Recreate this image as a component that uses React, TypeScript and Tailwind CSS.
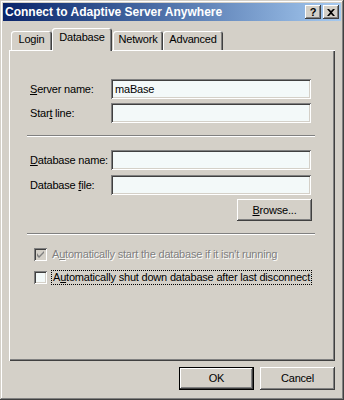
import React from "react";

const raised =
  "shadow-[inset_-1px_-1px_#404040,inset_1px_1px_#ffffff,inset_-2px_-2px_#808080,inset_2px_2px_#d4d0c8]";
const sunken =
  "shadow-[inset_1px_1px_#808080,inset_-1px_-1px_#ffffff,inset_2px_2px_#404040,inset_-2px_-2px_#d4d0c8]";

function Field({ label, value }: { label: React.ReactNode; value?: string }) {
  return (
    <div className="flex items-center h-[20px] pl-[3px]">
      <div className="w-[81px] shrink-0 whitespace-nowrap">{label}</div>
      <div className={`w-[200px] h-[20px] bg-[#f3f9f9] ${sunken} flex items-center px-[4px]`}>
        {value}
      </div>
    </div>
  );
}

function Separator() {
  return <div className="h-[2px] border-t border-t-[#808080] border-b border-b-white" />;
}

function Tab({ label, selected, w }: { label: string; selected?: boolean; w: string }) {
  if (selected) {
    return (
      <div
        className={`${w} h-[23px] -mb-px relative z-10 bg-[#d4d0c8] rounded-t-[3px] shadow-[inset_1px_1px_#ffffff,inset_-1px_0_#404040,inset_-2px_0_#808080] flex justify-center pt-[4px]`}
      >
        {label}
      </div>
    );
  }
  return (
    <div
      className={`${w} h-[19px] rounded-t-[3px] shadow-[inset_1px_1px_#ffffff,inset_-1px_0_#404040,inset_-2px_0_#808080] flex justify-center pt-[3px]`}
    >
      {label}
    </div>
  );
}

export default function App() {
  return (
    <div
      className="w-[344px] h-[400px] bg-[#d4d0c8] text-black text-[11px] tracking-[-0.2px] leading-none p-[3px] flex flex-col shadow-[inset_-1px_-1px_#404040,inset_1px_1px_#d4d0c8,inset_-2px_-2px_#808080,inset_2px_2px_#ffffff]"
      style={{ fontFamily: '"Liberation Sans", Arial, sans-serif' }}
    >
      {/* Title bar */}
      <div className="h-[18px] bg-gradient-to-r from-[#0a246a] to-[#a6caf0] flex items-center justify-between pl-[2px] pr-[2px]">
        <span className="text-white font-bold text-[12px] tracking-normal">
          Connect to Adaptive Server Anywhere
        </span>
        <div className="flex gap-[2px]">
          <div className={`w-[16px] h-[14px] bg-[#d4d0c8] ${raised} flex items-center justify-center font-bold text-[11px] tracking-normal`}>
            ?
          </div>
          <div className={`w-[16px] h-[14px] bg-[#d4d0c8] ${raised} flex items-center justify-center`}>
            <svg width="8" height="7" viewBox="0 0 8 7">
              <path d="M0 0h2l2 2 2-2h2L5 3.5 8 7H6L4 5 2 7H0l3-3.5z" fill="#000" />
            </svg>
          </div>
        </div>
      </div>

      {/* Tabs */}
      <div className="flex items-end h-[22px] mt-[7px] pl-[8px]">
        <Tab label="Login" w="w-[41px]" />
        <Tab label="Database" w="w-[60px]" selected />
        <div className="w-px" />
        <Tab label="Network" w="w-[50px]" />
        <Tab label="Advanced" w="w-[60px]" />
      </div>

      {/* Panel */}
      <div className="mx-[6px] h-[311px] shadow-[inset_1px_1px_#ffffff,inset_-1px_-1px_#404040,inset_-2px_-2px_#808080] pl-[18px] pr-[20px] pt-[29px] flex flex-col">
        <div className="flex flex-col gap-[4px]">
          <Field label={<><u>S</u>erver name:</>} value="maBase" />
          <Field label={<>Star<u>t</u> line:</>} />
        </div>
        <div className="mt-[12px]">
          <Separator />
        </div>
        <div className="flex flex-col gap-[5px] mt-[13px]">
          <Field label={<><u>D</u>atabase name:</>} />
          <Field label={<>Database <u>f</u>ile:</>} />
        </div>
        <div className="flex justify-end mt-[4px] pr-[3px]">
          <div className={`w-[75px] h-[22px] ${raised} flex items-center justify-center`}>
            <span><u>B</u>rowse...</span>
          </div>
        </div>
        <div className="mt-[12px]">
          <Separator />
        </div>
        <div className="flex flex-col gap-[10px] mt-[13px] pl-[7px]">
          <div className="flex items-center h-[13px]">
            <div className={`w-[13px] h-[13px] bg-[#d4d0c8] ${sunken} flex items-center justify-center`}>
              <svg width="7" height="7" viewBox="0 0 7 7">
                <path d="M0 2v3l2 2 5-5V0L2 5z" fill="#808080" />
              </svg>
            </div>
            <span className="ml-[5px] text-[#808080] [text-shadow:1px_1px_#ffffff]">
              A<u>u</u>tomatically start the database if it isn't running
            </span>
          </div>
          <div className="flex items-center h-[13px]">
            <div className={`w-[13px] h-[13px] bg-[#f3f9f9] ${sunken}`} />
            <span className="ml-[4px] px-[1px] py-[1px] border border-dotted border-black">
              A<u>u</u>tomatically shut down database after last disconnect
            </span>
          </div>
        </div>
      </div>

      {/* Buttons */}
      <div className="flex justify-end gap-[6px] mt-[6px] pr-[6px]">
        <div className="w-[75px] h-[23px] border border-black">
          <div className={`w-full h-full ${raised} flex items-center justify-center`}>OK</div>
        </div>
        <div className={`w-[75px] h-[23px] ${raised} flex items-center justify-center`}>Cancel</div>
      </div>
    </div>
  );
}
